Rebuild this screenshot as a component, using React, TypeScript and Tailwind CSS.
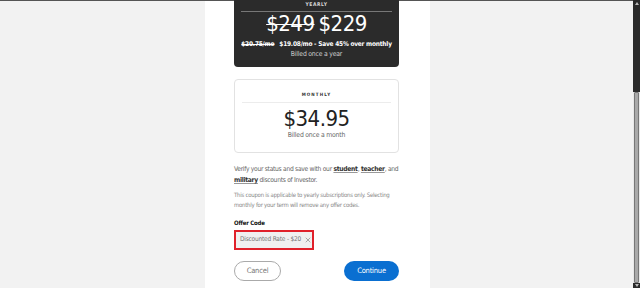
import { X } from "lucide-react";

const cond = "font-['DejaVu_Sans_Condensed',Roboto,sans-serif]";

const YearlyCard = () => (
  <div className="-mt-[8px] rounded-[4px] bg-[#2b2b2b] px-[7px] pt-[8px] pb-[8px] text-center text-white">
    <div className="text-[5px] font-bold leading-[6px] tracking-[0.12em] text-[#d8d8d8]">YEARLY</div>
    <div className="mt-[4px] h-px bg-[#777]" />
    <div className="flex justify-center gap-[4px] text-[22px] leading-[24px] tracking-[-0.5px] font-light">
      <span className="line-through decoration-1">$249</span>
      <span>$229</span>
    </div>
    <div className="mt-[4px] whitespace-nowrap text-[6.5px] font-bold leading-[9px] tracking-[-0.2px]">
      <span className="line-through">$20.75/mo</span>
      <span className="ml-[5px]">$19.08/mo - Save 45% over monthly</span>
    </div>
    <div className="mt-[1px] text-[6.8px] leading-[9px] tracking-[-0.2px] text-[#cfcfcf]">Billed once a year</div>
  </div>
);

const MonthlyCard = () => (
  <div className="mt-[12px] rounded-[4px] border border-[#e2e2e2] bg-white px-[7px] pt-[12px] pb-[12px] text-center">
    <div className="text-[4.5px] font-bold leading-[6px] tracking-[0.25em] text-[#333]">MONTHLY</div>
    <div className="mt-[4px] h-px bg-[#ececec]" />
    <div className="mt-[5px] text-[22px] leading-[22px] tracking-[-0.5px] font-light text-[#222]">$34.95</div>
    <div className="mt-[1px] text-[6.8px] leading-[9px] tracking-[-0.2px] text-[#666]">Billed once a month</div>
  </div>
);

export default function App() {
  return (
    <div className={`flex h-[288px] w-[640px] overflow-hidden bg-[#f2f2f2] ${cond}`}>
      <div className="flex h-full w-[633px] flex-col border-t border-[#555]">
        <div className="ml-[205px] h-full w-[225px] bg-white px-[29px]">
          <div className="w-[165px]">
            <YearlyCard />
            <MonthlyCard />
            <p className="mt-[11px] text-[6.7px] leading-[11px] tracking-[-0.3px] text-[#666]">
              Verify your status and save with our{" "}
              <span className="font-bold text-[#333] underline decoration-[#999]">student</span>,{" "}
              <span className="font-bold text-[#333] underline decoration-[#999]">teacher</span>, and{" "}
              <span className="font-bold text-[#333] underline decoration-[#999]">military</span> discounts of Investor.
            </p>
            <p className="mt-[4px] text-[6px] leading-[10px] tracking-[-0.25px] text-[#888]">
              This coupon is applicable to yearly subscriptions only. Selecting monthly for your term will remove any offer codes.
            </p>
            <div className="mt-[8px] text-[6px] font-bold leading-[9px] tracking-[-0.2px] text-[#111]">Offer Code</div>
            <div className="mt-[3px] flex h-[20px] w-[80px] items-center gap-[3px] border-2 border-[#e0212b] bg-[#f0f0f0] px-[4px] text-[6.5px] tracking-[-0.2px] whitespace-nowrap text-[#777]">
              <span>Discounted Rate - $20</span>
              <X size={8} strokeWidth={1.6} className="shrink-0 text-[#666]" />
            </div>
            <div className="mt-[11px] flex items-center justify-between">
              <button className="h-[20px] w-[47px] rounded-full border border-[#aaa] bg-white text-[7.5px] tracking-[-0.2px] text-[#777]">
                Cancel
              </button>
              <button className="h-[20px] w-[55px] rounded-full bg-[#0a6fd1] text-[7.5px] tracking-[-0.2px] text-white">
                Continue
              </button>
            </div>
          </div>
        </div>
      </div>
      <div className="flex h-full w-[7px] flex-col bg-[#e8e8e8]">
        <div className="flex h-[92px] flex-col items-center bg-[#2b2b2b] pt-[2px]">
          <div className="h-0 w-0 border-x-[2px] border-b-[3px] border-x-transparent border-b-[#bbb]" />
        </div>
        <div className="mx-[1px] flex-1 rounded-[1px] border border-[#777] bg-[#a9a9a9]" />
        <div className="flex h-[5px] items-center justify-center bg-[#2b2b2b]">
          <div className="h-0 w-0 border-x-[2px] border-t-[3px] border-x-transparent border-t-[#bbb]" />
        </div>
      </div>
    </div>
  );
}
